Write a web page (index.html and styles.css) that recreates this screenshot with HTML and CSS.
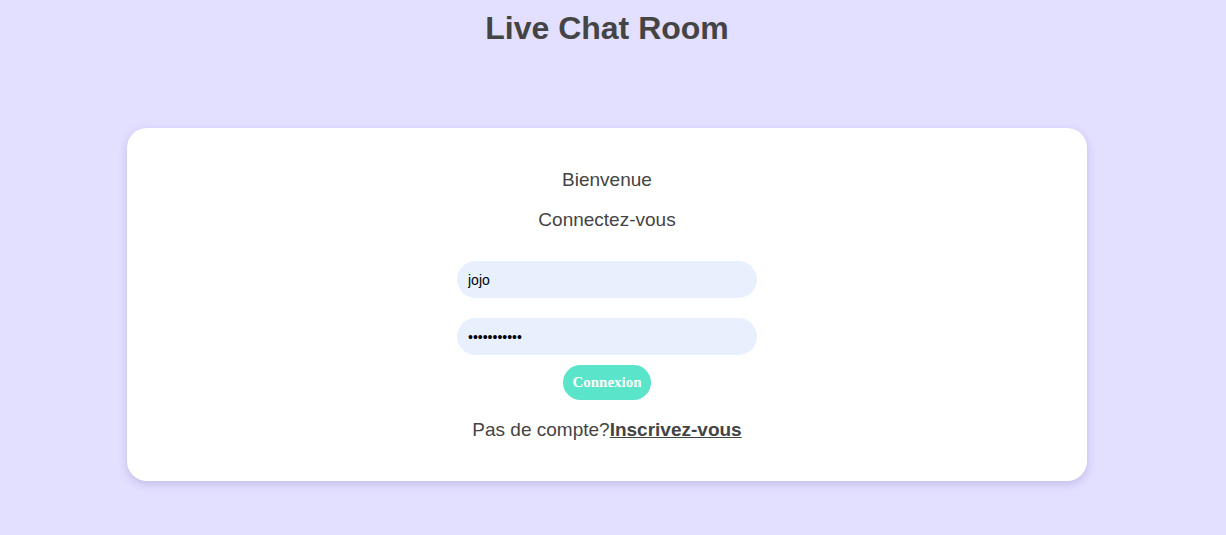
FILE: index.html
```html
<!DOCTYPE html>
<html lang="fr">
<head>
<meta charset="utf-8">
<title>Live Chat Room</title>
<link rel="stylesheet" href="styles.css">
</head>
<body>
<div class="page">
  <h1 class="title">Live Chat Room</h1>
  <div class="card">
    <p class="welcome">Bienvenue</p>
    <p class="subtitle">Connectez-vous</p>
    <form class="form">
      <input class="field" type="text" value="jojo">
      <input class="field" type="password" value="12345678901">
      <button class="btn" type="button">Connexion</button>
    </form>
    <p class="signup">Pas de compte?<a class="link" href="#">Inscrivez-vous</a></p>
  </div>
</div>
</body>
</html>
```

FILE: styles.css
```css
html, body {
  margin: 0;
  padding: 0;
  background: #e2dfff;
  height: 100%;
}
body {
  font-family: "Liberation Sans", Arial, sans-serif;
  color: #444;
}
.page {
  width: 1214px;
  display: flex;
  flex-direction: column;
  align-items: center;
}
.title {
  margin: 10px 0 0;
  font-size: 32px;
  line-height: 37px;
  font-weight: bold;
  color: #444;
}
.card {
  margin-top: 81px;
  width: 960px;
  height: 353px;
  box-sizing: border-box;
  background: #fff;
  border-radius: 20px;
  box-shadow: 0 3px 8px rgba(100, 90, 160, 0.25);
  display: flex;
  flex-direction: column;
  align-items: center;
  padding-top: 41px;
}
.welcome, .subtitle {
  margin: 0;
  font-size: 19px;
  line-height: 22px;
}
.subtitle {
  margin-top: 18px;
}
.form {
  margin-top: 30px;
  display: flex;
  flex-direction: column;
  align-items: center;
}
.field {
  width: 300px;
  height: 37px;
  box-sizing: border-box;
  border: none;
  outline: none;
  border-radius: 19px;
  background: #e8f0fe;
  padding: 0 11px;
  font-family: "Liberation Sans", Arial, sans-serif;
  font-size: 14px;
  color: #000;
  margin-bottom: 20px;
}
.field + .field {
  margin-bottom: 10px;
}
.btn {
  width: 88px;
  height: 35px;
  border: none;
  border-radius: 18px;
  background: #5ae4c9;
  color: #fff;
  font-family: "Liberation Serif", "Times New Roman", serif;
  font-weight: bold;
  font-size: 15px;
  padding: 0;
}
.signup {
  margin: 19px 0 0;
  font-size: 19px;
  line-height: 22px;
}
.link {
  color: #444;
  font-weight: bold;
  text-decoration: underline;
}
```
